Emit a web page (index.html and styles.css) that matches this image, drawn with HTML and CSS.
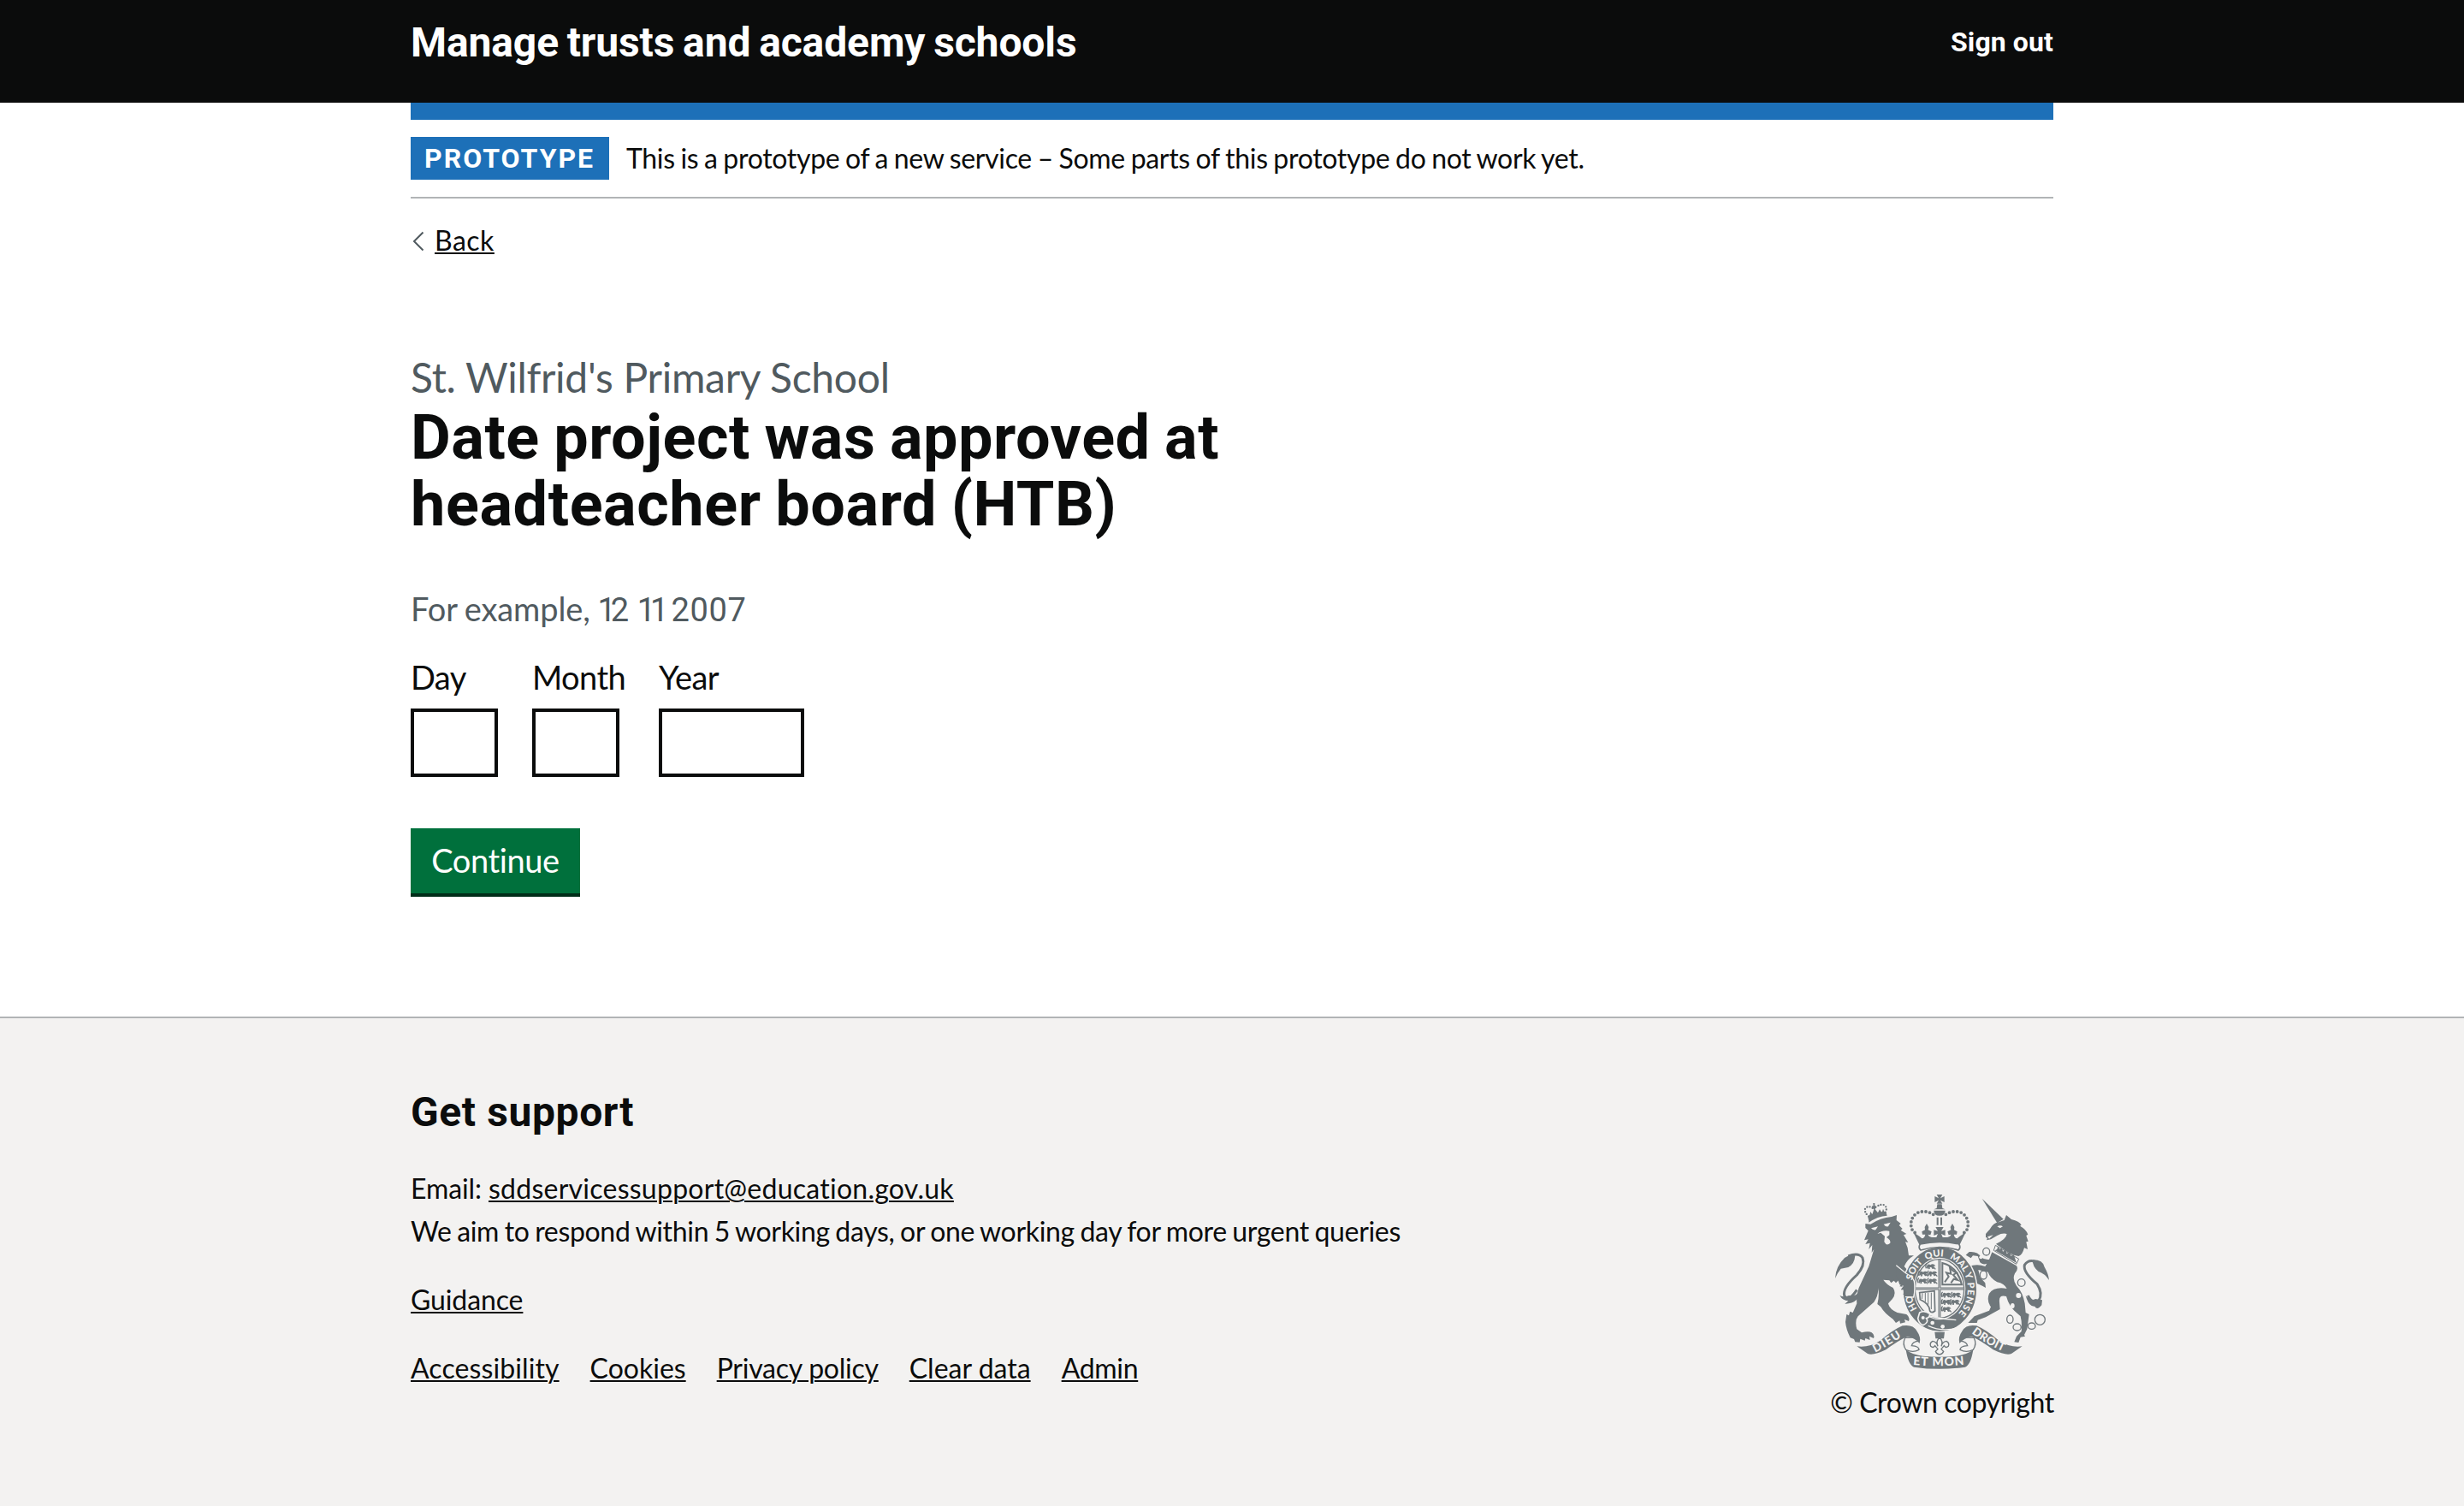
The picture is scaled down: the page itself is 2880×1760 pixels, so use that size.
FILE: index.html
```html
<!DOCTYPE html>
<html lang="en">
<head>
<meta charset="utf-8">
<title>Date project was approved at headteacher board (HTB)</title>
<link rel="stylesheet" href="styles.css">
</head>
<body>
<header class="header">
  <div class="container header-row">
    <span class="service-name">Manage trusts and academy schools</span>
    <a class="sign-out">Sign out</a>
  </div>
</header>
<div class="container page">
  <div class="header-bar"></div>
  <div class="phase-banner">
    <strong class="tag">PROTOTYPE</strong>
    <span class="phase-text">This is a prototype of a new service – Some parts of this prototype do not work yet.</span>
  </div>
  <div class="back-row">
    <svg class="chevron" viewBox="0 0 16 26"><path d="M14.500 2.500L4 13L14.500 23.500" fill="none" stroke="#505a5f" stroke-width="2"/></svg>
    <a class="link back">Back</a>
  </div>
  <main class="main">
    <span class="caption">St. Wilfrid's Primary School</span>
    <h1 class="heading">Date project was approved at<br><span class="heading-second">headteacher board (HTB)</span></h1>
    <div class="hint">For example, <span class="hint-date"><span class="ones">1</span>2 <span class="ones">11</span> 2007</span></div>
    <div class="date-input">
      <div class="date-item day"><label class="label">Day</label><div class="input"></div></div>
      <div class="date-item month"><label class="label">Month</label><div class="input"></div></div>
      <div class="date-item year"><label class="label">Year</label><div class="input wide"></div></div>
    </div>
    <div class="button">Continue</div>
  </main>
</div>
<footer class="footer">
  <div class="container footer-row">
    <div class="footer-meta">
      <h2 class="footer-heading">Get support</h2>
      <p class="footer-text">Email: <a class="link email">sddservicessupport@education.gov.uk</a><br><span class="respond">We aim to respond within 5 working days, or one working day for more urgent queries</span></p>
      <p class="footer-text"><a class="link guidance">Guidance</a></p>
      <nav class="footer-links">
        <a class="link accessibility">Accessibility</a><a class="link cookies">Cookies</a><a class="link privacy">Privacy policy</a><a class="link clear-data">Clear data</a><a class="link admin">Admin</a>
      </nav>
    </div>
    <div class="copyright">
      <svg class="crest" viewBox="72 48 750 612">
        <defs>
          <path id="garter" d="M438 493A99 114 0 0 1 438 265A99 114 0 0 1 438 493"/>
          <path id="ribbonLeft" d="M212 602Q265 575 318 538"/>
          <path id="ribbonRight" d="M550 534Q600 572 668 601"/>
          <path id="ribbonMid" d="M345 645Q438 654 532 643"/>
          <g id="beast">
            <path d="M-14 -7q6 -7 12 -1q6 -5 13 -2l5 5l-8 2l3 8l-6 1l-4 -6l-5 0l0 6l-6 1l1 -7l-4 5l-3 -2z"/>
            <path d="M-17 4q-4 -12 3 -17M8 -2l8 9" fill="none" stroke="#6f777b" stroke-width="4"/>
          </g>
        </defs>
        <!-- lion -->
        <g class="ink">
          <path d="M190 140L186 124Q215 108 250 108L254 122Q220 124 190 146Z"/>
          <path class="dots small" d="M190 124Q174 112 177 98Q186 84 204 96M248 110Q256 96 246 86Q232 78 212 94"/>
          <path d="M192 124L196 108L202 118L208 100L200 92L202 88L206 88L205 78L211 78L211 87L216 90L212 100L222 112L228 100L236 112L240 98L246 112Z"/>
          <path d="M178 150L196 152Q230 130 270 126L288 120L287 138L302 150L296 156L308 168L302 173L322 186L312 190L328 216L318 214L326 235L330 262L348 262Q325 275 314 300L340 330Q350 345 346 372Q352 390 345 406L318 405L322 395L310 400L316 385L303 382L312 372L298 370L308 358L295 348L285 358L278 350L268 358L262 349L241 347Q250 362 275 375Q288 395 272 415L258 430Q262 450 290 462L322 468Q336 478 330 492L315 486L318 496L300 500L298 490L285 498L275 485Q245 465 232 442L220 432Q228 400 222 375Q225 400 208 425Q180 450 152 475Q140 490 148 520L165 532Q190 525 200 532Q212 540 207 552L192 545L194 558L178 552L176 560L160 554L158 566L142 565L138 555L125 550Q110 520 108 495L112 468L120 472L124 458L134 462L148 430Q145 400 155 375L190 300L208 240L200 252L202 225L190 240L194 218L178 222L188 205L174 208L188 175L178 165Z"/>
          <path d="M148 382Q118 428 104 402Q98 375 148 330Q178 296 168 270Q154 250 118 264" fill="none" stroke="#6f777b" stroke-width="9"/>
          <path d="M72 342Q74 300 105 270Q130 255 142 262Q140 292 118 303L92 308Q80 322 72 342Z"/>
          <path d="M88 402Q104 410 120 402Q145 408 156 388Q158 408 146 418Q130 432 106 431L118 421Q98 420 88 402Z"/>
        </g>
        <g class="paper">
          <path d="M198 166L222 160L214 172Q204 174 198 166ZM242 152L266 146L258 160Q248 162 242 152Z"/>
          <path d="M220 186Q236 172 262 176L262 190L252 198Q268 208 265 218Q252 230 244 214L246 194L232 182Z"/>
        </g>
        <!-- unicorn -->
        <g class="ink">
          <path d="M587 62L662 134L640 148Z"/>
          <path d="M600 186Q606 178 614 170Q628 146 645 145L665 138L672 120L690 135Q718 142 725 155L720 158Q742 170 748 188L742 192L749 212L742 214L747 240L735 235Q728 262 715 264Q690 262 650 232L636 221Q672 204 674 186Q658 182 640 192L618 205L603 208L606 200L600 198Z"/>
          <path d="M622 250L708 298Q716 310 702 325Q692 345 708 368Q730 390 737 430L740 462L752 468L745 520L735 540L738 545L722 548L715 567L700 565L708 545L725 528Q728 500 722 475L700 455Q680 435 672 405Q645 398 648 425L650 450L600 478L572 488L569 498L538 498L560 475L612 455L618 442Q602 420 612 395Q630 370 674 378Q665 360 640 355Q615 340 608 320L574 312L580 338L598 358L600 375L588 368L570 360L552 320L540 300Q570 290 598 300L604 290Q590 296 580 286L572 264L555 262L548 271L530 260L542 249Q572 246 584 268Q596 278 612 276Z"/>
          <path d="M748 402Q760 430 785 422Q802 395 780 362Q730 320 736 295Q752 270 786 288" fill="none" stroke="#6f777b" stroke-width="9"/>
          <path d="M764 277Q800 276 806 302Q820 326 822 348Q806 324 785 318Q764 302 764 277Z"/>
          <path d="M740 402Q758 424 774 414L798 418L796 436Q780 456 772 440Q750 442 740 402Z"/>
        </g>
        <path d="M634 226L716 274L707 292L628 244Z" fill="#f3f2f1" stroke="#6f777b" stroke-width="3"/>
        <path class="ink" d="M640 240L642 230L650 240L656 234L660 248L670 242L674 256L684 248L688 264L698 258L704 276L708 288L632 244Z"/>
        <path class="paper" d="M640 160Q652 154 660 160L650 166ZM606 196L626 190L612 203Z"/>
        <g fill="none" stroke="#6f777b" stroke-width="4">
          <ellipse cx="602" cy="248" rx="12" ry="13"/><ellipse cx="592" cy="330" rx="12" ry="15"/>
          <circle cx="725" cy="357" r="13" fill="#f3f2f1"/><ellipse cx="685" cy="485" rx="11" ry="14"/>
          <ellipse cx="710" cy="513" rx="14" ry="12"/><ellipse cx="761" cy="509" rx="13" ry="11"/><circle cx="790" cy="487" r="18"/>
        </g>
        <g class="paper"><circle cx="715" cy="402" r="9"/><ellipse cx="694" cy="438" rx="7" ry="9"/><circle cx="583" cy="268" r="6"/></g>
        <!-- garter and shield -->
        <ellipse cx="439" cy="380" rx="130" ry="149" fill="#6f777b" stroke="#f3f2f1" stroke-width="4"/>
        <ellipse cx="438" cy="378" rx="91" ry="109" fill="#f3f2f1"/>
        <ellipse cx="438" cy="378" rx="86" ry="103" fill="#f3f2f1" stroke="#6f777b" stroke-width="4"/>
        <path d="M438 274V482M351 378H525" stroke="#6f777b" stroke-width="9"/>
        <path d="M438 276V480M353 378H523" stroke="#f3f2f1" stroke-width="2"/>
        <g class="ink">
          <use href="#beast" x="408" y="303"/><use href="#beast" x="382" y="328"/><use href="#beast" x="414" y="328"/>
          <use href="#beast" x="380" y="354"/><use href="#beast" x="414" y="354"/>
          <use href="#beast" x="463" y="403"/><use href="#beast" x="497" y="403"/><use href="#beast" x="463" y="428"/><use href="#beast" x="493" y="428"/><use href="#beast" x="463" y="453"/>
        </g>
        <g fill="none" stroke="#6f777b">
          <path d="M448 288Q500 300 516 364H448Z" stroke-width="6"/>
          <path d="M456 355L470 336L462 322L478 326L474 304L486 316L498 322L486 330L502 348L488 344L478 358" stroke-width="6"/>
          <path d="M368 392L420 386L422 456Q410 466 404 456Q402 430 370 416Z" stroke-width="5"/>
          <path d="M378 394L376 414M388 393V424M398 392V434M409 392V450" stroke-width="3"/>
        </g>
        <path d="M286 296L318 322Q340 334 348 350Q353 378 345 406L320 405L324 394L310 399L316 383L303 380L312 368L298 364L288 336Z" class="ink"/>
        <path d="M286 296L320 324Q342 334 349 352Q354 378 347 408L318 407" fill="none" stroke="#f3f2f1" stroke-width="4"/>
        <g class="motto garter-text">
          <text><textPath href="#garter" startOffset="93">HO</textPath></text>
          <text><textPath href="#garter" startOffset="197">SOIT</textPath></text>
          <text><textPath href="#garter" startOffset="286">QUI</textPath></text>
          <text><textPath href="#garter" startOffset="370">MAL</textPath></text>
          <text><textPath href="#garter" startOffset="447">Y</textPath></text>
          <text><textPath href="#garter" startOffset="480" textLength="116">PENSE</textPath></text>
        </g>
        <path d="M368 462Q385 452 404 466Q404 480 392 482Q402 496 380 506Q366 502 362 482Z" fill="#6f777b" stroke="#f3f2f1" stroke-width="5"/>
        <circle class="paper" cx="380" cy="480" r="6"/>
        <path d="M404 474Q450 486 496 488M398 508Q450 532 505 514" fill="none" stroke="#f3f2f1" stroke-width="4"/>
        <circle class="paper" cx="413" cy="498" r="7"/><circle class="paper" cx="449" cy="511" r="7"/>
        <!-- crown -->
        <g class="ink">
          <path d="M428 48H448L441 61L455 54V75L441 68L448 80H428L435 68L421 75V54L435 61Z"/>
          <path d="M430 82H446L448 96L458 100H418L428 96ZM418 104H458Q458 122 438 122Q418 122 418 104Z"/>
          <path d="M428 128H434V155H428ZM441 128H447V155H441ZM424 162H452L444 176L458 172V192L444 186L450 200H426L432 186L418 192V172L432 176Z"/>
          <path class="dots" d="M416 118Q388 100 358 113Q330 135 341 170L352 182M460 118Q488 100 518 113Q546 135 535 170L524 182"/>
          <path d="M346 180L368 195L376 202Q386 200 388 188L378 188L376 178L387 172L386 162L393 150L400 162L398 172L410 178L406 190L398 188Q400 200 426 198H450Q476 200 478 188L470 190L466 178L478 172L476 162L483 150L490 162L489 172L500 178L498 188L488 188Q490 200 500 202L508 195L530 180L508 226Q438 208 368 226Z"/>
        </g>
        <path d="M370 222Q438 206 506 222Q514 234 504 243Q438 222 372 243Q362 234 370 222Z" fill="#f3f2f1" stroke="#6f777b" stroke-width="5"/>
        <!-- pendant -->
        <g class="ink"><path d="M421 530H456L453 553H424Z"/></g>
        <path d="M438 550Q424 562 432 580Q428 564 414 562Q402 568 407 580Q416 588 422 578L432 590L424 598Q430 610 438 608Q446 610 452 598L444 590L454 578Q460 588 469 580Q474 568 462 562Q448 564 444 580Q452 562 438 550Z" fill="#f3f2f1" stroke="#6f777b" stroke-width="4"/>
        <!-- ribbon -->
        <g id="scroll">
          <path d="M362 545Q340 552 318 549Q306 572 320 592Q345 604 366 592Q366 580 340 578Q344 562 366 562" fill="#f3f2f1" stroke="#6f777b" stroke-width="4"/>
          <path class="ink" d="M148 580Q190 586 230 560Q275 522 308 508Q345 502 358 526Q374 548 368 570Q352 550 324 546Q290 562 250 592Q205 614 186 606Z"/>
        </g>
        <use href="#scroll" transform="translate(876 0) scale(-1 1)"/>
        <path class="ink" d="M320 592Q345 612 380 614Q438 620 496 614Q531 612 556 592Q548 645 528 653Q438 666 348 653Q328 645 320 592Z"/>
        <g class="motto">
          <text><textPath href="#ribbonLeft" textLength="108">DIEU</textPath></text>
          <text><textPath href="#ribbonRight" textLength="128">DROIT</textPath></text>
          <text class="mid"><textPath href="#ribbonMid" textLength="180">ET MON</textPath></text>
        </g>
      </svg>
      <span class="copyright-text">© Crown copyright</span>
    </div>
  </div>
</footer>
</body>
</html>
```
FILE: styles.css
```css
* { box-sizing: border-box; }
body {
  margin: 0;
  min-height: 1760px;
  display: flex;
  flex-direction: column;
  background: #fff;
  color: #0b0c0c;
  font-family: Lato, "Liberation Sans", sans-serif;
  font-size: 32px;
  line-height: 50px;
}
.container { width: 1920px; margin: 0 auto; }
.header { height: 120px; background: #0b0c0c; color: #fff; }
.header-row { display: flex; justify-content: space-between; align-items: flex-start; }
.service-name, .sign-out, .tag, .heading, .footer-heading { font-family: Roboto, "Liberation Sans", sans-serif; font-weight: 700; }
.service-name { font-size: 48px; line-height: 60px; padding-top: 20px; letter-spacing: -0.12px; word-spacing: -2px; }
.sign-out { font-size: 32px; line-height: 40px; padding-top: 29px; letter-spacing: 0.1px; }
.header-bar { height: 20px; background: #1d70b8; }
.phase-banner { display: flex; align-items: center; gap: 20px; height: 92px; border-bottom: 2px solid #b1b4b6; }
.tag { width: 232px; height: 50px; padding-left: 16px; background: #1d70b8; color: #fff; line-height: 50px; letter-spacing: 2px; white-space: nowrap; }
.phase-text { line-height: 46px; letter-spacing: -0.31px; word-spacing: -1.2px; white-space: nowrap; }
.back-row { display: flex; align-items: flex-start; padding-top: 31px; height: 80px; line-height: 36px; }
.chevron { width: 16px; height: 26px; margin: 6px 12px 0 0; }
.link { text-decoration: underline; text-decoration-thickness: 2px; text-underline-offset: 2px; }
.back { letter-spacing: 0.5px; }
.main { height: 876px; padding-top: 99px; }
.caption { display: block; font-size: 48px; line-height: 60px; color: #505a5f; letter-spacing: -0.3px; }
.heading { margin: 0; padding-top: 2px; font-size: 72px; line-height: 78px; letter-spacing: 0.55px; word-spacing: -2px; white-space: nowrap; }
.heading-second { letter-spacing: 0.6px; }
.hint { height: 50px; margin-top: 57px; font-size: 38px; line-height: 50px; color: #505a5f; letter-spacing: -0.1px; word-spacing: -1px; }
.hint-date { font-family: Roboto, sans-serif; line-height: 1; letter-spacing: 0.6px; }
.ones { letter-spacing: -6px; }
.date-input { display: flex; margin-top: 30px; font-size: 38px; }
.date-item { display: flex; flex-direction: column; }
.day { width: 142px; }
.month { width: 148px; }
.label { line-height: 50px; letter-spacing: -0.6px; }
.input { width: 102px; height: 80px; margin-top: 12px; border: 4px solid #0b0c0c; background: #fff; }
.wide { width: 170px; }
.button { width: 198px; height: 80px; margin-top: 60px; background: #00703c; border-bottom: 4px solid #002d18; color: #fff; font-size: 38px; line-height: 74px; text-align: center; letter-spacing: -0.4px; }
.footer { flex: 1; border-top: 2px solid #b1b4b6; background: #f3f2f1; }
.footer-row { display: flex; justify-content: space-between; align-items: flex-start; padding-top: 80px; }
.footer-heading { margin: 0 0 34px; font-size: 48px; line-height: 60px; letter-spacing: 0.6px; }
.footer-text { margin: 0 0 30px; letter-spacing: -0.1px; }
.email { letter-spacing: 0.25px; }
.respond { letter-spacing: -0.32px; word-spacing: -1.3px; white-space: nowrap; }
.footer-links { display: flex; gap: 36px; white-space: nowrap; }
.accessibility { letter-spacing: 0.1px; }
.privacy { letter-spacing: -0.25px; }
.clear-data { letter-spacing: 0; }
.admin { letter-spacing: -0.3px; }
.copyright { width: 260px; padding-top: 126px; display: flex; flex-direction: column; align-items: center; }
.crest { width: 250px; height: 204px; display: block; }
.copyright-text { margin-top: 14px; line-height: 50px; letter-spacing: -0.4px; white-space: nowrap; }
.ink { fill: #6f777b; }
.paper { fill: #f3f2f1; }
.dots { fill: none; stroke: #6f777b; stroke-width: 11.500px; stroke-linecap: round; stroke-dasharray: 0 14; }
.small { stroke-width: 7px; stroke-dasharray: 0 10; }
.motto { fill: #f3f2f1; font-family: Lato, sans-serif; font-weight: 900; font-size: 40px; }
.mid { font-size: 42px; }
.garter-text { font-size: 33px; }
```
